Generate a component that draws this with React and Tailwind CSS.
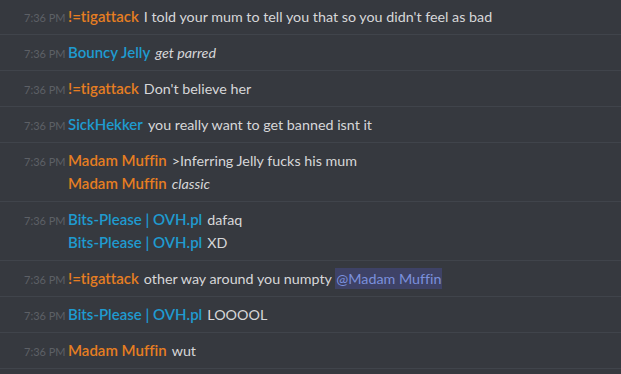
import React from "react";

const ORANGE = "text-[#e67e22]";
const BLUE = "text-[#1f9bd0]";

const rows = [
  { lines: [{ name: "!=tigattack", color: ORANGE, text: "I told your mum to tell you that so you didn't feel as bad" }] },
  { lines: [{ name: "Bouncy Jelly", color: BLUE, text: "get parred", italic: true }] },
  { lines: [{ name: "!=tigattack", color: ORANGE, text: "Don't believe her" }] },
  { lines: [{ name: "SickHekker", color: BLUE, text: "you really want to get banned isnt it" }] },
  {
    lines: [
      { name: "Madam Muffin", color: ORANGE, text: ">Inferring Jelly fucks his mum" },
      { name: "Madam Muffin", color: ORANGE, text: "classic", italic: true },
    ],
  },
  {
    lines: [
      { name: "Bits-Please | OVH.pl", color: BLUE, text: "dafaq" },
      { name: "Bits-Please | OVH.pl", color: BLUE, text: "XD" },
    ],
  },
  { lines: [{ name: "!=tigattack", color: ORANGE, text: "other way around you numpty ", mention: "@Madam Muffin" }] },
  { lines: [{ name: "Bits-Please | OVH.pl", color: BLUE, text: "LOOOOL" }] },
  { lines: [{ name: "Madam Muffin", color: ORANGE, text: "wut" }] },
];

const Line = ({ line, stamp }) => (
  <div className="flex items-baseline h-[23px] leading-[23px] overflow-hidden">
    <span className="w-[68px] shrink-0 pl-[24px] text-[11px] text-[#5d6066]">{stamp ? "7:36 PM" : ""}</span>
    <span className={`${line.color} text-[15px] font-semibold mr-[5px]`}>{line.name}</span>
    <span className={`text-[14.3px] text-[#d6d7d9] ${line.italic ? "italic" : ""}`}>
      {line.text}
      {line.mention && <span className="bg-[#3e4266] text-[#7b90dc] px-[1px] py-[2px]">{line.mention}</span>}
    </span>
  </div>
);

export default function App() {
  return (
    <div
      className="w-[621px] h-[374px] overflow-hidden bg-[#36393f] [font-variant-ligatures:none]"
      style={{ fontFamily: "Lato, 'Open Sans', sans-serif" }}
    >
      <div className="mt-[-1px]">
        {rows.map((row, i) => (
          <div key={i} className="py-[6px] border-b border-[#40444b]">
            {row.lines.map((line, j) => (
              <Line key={j} line={line} stamp={j === 0} />
            ))}
          </div>
        ))}
      </div>
    </div>
  );
}
